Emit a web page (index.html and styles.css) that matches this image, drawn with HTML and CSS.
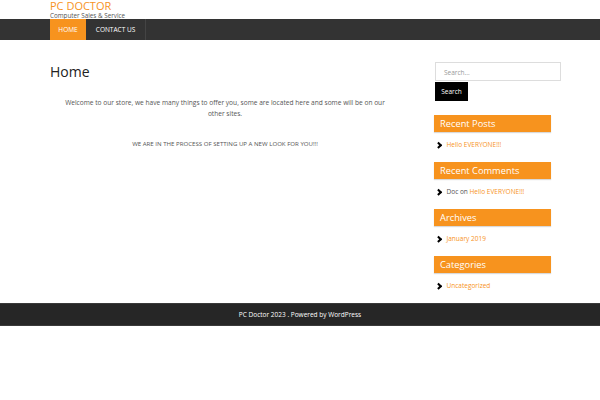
FILE: index.html
```html
<!DOCTYPE html>
<html>
<head>
<meta charset="utf-8">
<link rel="stylesheet" href="styles.css">
</head>
<body>
<header class="site-header">
  <div class="brand">
    <div class="site-title">PC DOCTOR</div>
    <div class="tagline">Computer Sales &amp; Service</div>
  </div>
  <nav class="navbar">
    <ul class="menu">
      <li class="menu-item active">HOME</li>
      <li class="menu-item">CONTACT US</li>
    </ul>
  </nav>
</header>
<main class="container">
  <section class="content">
    <h1 class="page-title">Home</h1>
    <p class="intro">Welcome to our store, we have many things to offer you, some are located here and some will be on our other sites.</p>
    <p class="notice">WE ARE IN THE PROCESS OF SETTING UP A NEW LOOK FOR YOU!!!</p>
  </section>
  <aside class="sidebar">
    <div class="search">
      <div class="search-input">Search...</div>
      <div class="search-btn">Search</div>
    </div>
    <div class="widget">
      <h2 class="widget-title">Recent Posts</h2>
      <ul class="widget-list"><li><span class="chev"></span><a>Hello EVERYONE!!!</a></li></ul>
    </div>
    <div class="widget">
      <h2 class="widget-title">Recent Comments</h2>
      <ul class="widget-list"><li><span class="chev"></span><span class="plain">Doc</span>&nbsp;on&nbsp;<a>Hello EVERYONE!!!</a></li></ul>
    </div>
    <div class="widget">
      <h2 class="widget-title">Archives</h2>
      <ul class="widget-list"><li><span class="chev"></span><a>January 2019</a></li></ul>
    </div>
    <div class="widget">
      <h2 class="widget-title">Categories</h2>
      <ul class="widget-list"><li><span class="chev"></span><a>Uncategorized</a></li></ul>
    </div>
  </aside>
</main>
<footer class="site-footer">PC Doctor 2023 . Powered by WordPress</footer>
</body>
</html>
```
FILE: styles.css
```css
* { box-sizing: border-box; }
body {
  margin: 0;
  font-family: "Open Sans", "Noto Sans", sans-serif;
  background: #fff;
  color: #444;
}
.brand { padding: 0 0 0 50px; height: 19px; display: flex; flex-direction: column; justify-content: space-between; }
.site-title {
  color: #f7931e;
  font-size: 11px;
  line-height: 11px;
}
.tagline {
  color: #555;
  font-size: 6.3px;
  line-height: 7px;
}
.navbar {
  background: #333;
  height: 21px;
  padding-left: 50px;
}
.menu {
  list-style: none;
  margin: 0;
  padding: 0;
  display: flex;
  height: 100%;
}
.menu-item {
  font-size: 6.5px;
  color: #fff;
  display: flex;
  align-items: center;
  justify-content: center;
  width: 60px;
  border-right: 1px solid #444;
}
.menu-item.active {
  background: #f7931e;
  width: 36px;
  border-right: none;
}
.container {
  display: flex;
  padding: 0 39px 0 50px;
  height: 263px;
}
.content { width: 350px; }
.page-title {
  font-weight: 400;
  font-size: 14px;
  color: #222;
  margin: 24px 0 0;
  line-height: 16px;
}
.intro {
  text-align: center;
  font-size: 6.6px;
  line-height: 11px;
  color: #555;
  margin: 17px 10px 0;
}
.notice {
  text-align: center;
  font-size: 6.1px;
  line-height: 11px;
  color: #555;
  margin: 19px 0 0;
}
.sidebar { margin-left: 34px; width: 127px; padding-top: 22px; }
.search-input {
  border: 1px solid #ddd;
  height: 19px;
  font-size: 6.5px;
  color: #999;
  padding: 5px 8px;
  width: 126px;
  margin-left: 1px;
}
.search-btn {
  background: #000;
  color: #fff;
  font-size: 6.5px;
  width: 33px;
  height: 19px;
  margin: 1px 0 0 1px;
  display: flex;
  align-items: center;
  justify-content: center;
}
.widget { width: 117px; margin-top: 14px; }
.widget + .widget { margin-top: 0; }
.widget-title {
  margin: 0;
  background: #f7931e;
  color: #fff;
  font-weight: 400;
  font-size: 9.3px;
  height: 17px;
  line-height: 17px;
  padding-left: 6px;
  box-shadow: 0 1px 1px rgba(0,0,0,0.15);
}
.widget-list {
  list-style: none;
  margin: 0;
  padding: 8px 0 0 2px;
  height: 30px;
}
.widget-list li {
  display: flex;
  align-items: center;
  font-size: 6.5px;
  color: #555;
  line-height: 10px;
}
.widget-list a { color: #f7931e; }
.chev {
  width: 4.5px;
  height: 4.5px;
  border-right: 2px solid #000;
  border-bottom: 2px solid #000;
  transform: rotate(-45deg);
  margin-right: 6px;
  flex: none;
}
.site-footer {
  background: #262626;
  border-top: 1px solid #3a3a3a;
  border-bottom: 1px solid #3a3a3a;
  height: 23px;
  color: #fff;
  font-size: 6.5px;
  display: flex;
  align-items: center;
  justify-content: center;
}
```
